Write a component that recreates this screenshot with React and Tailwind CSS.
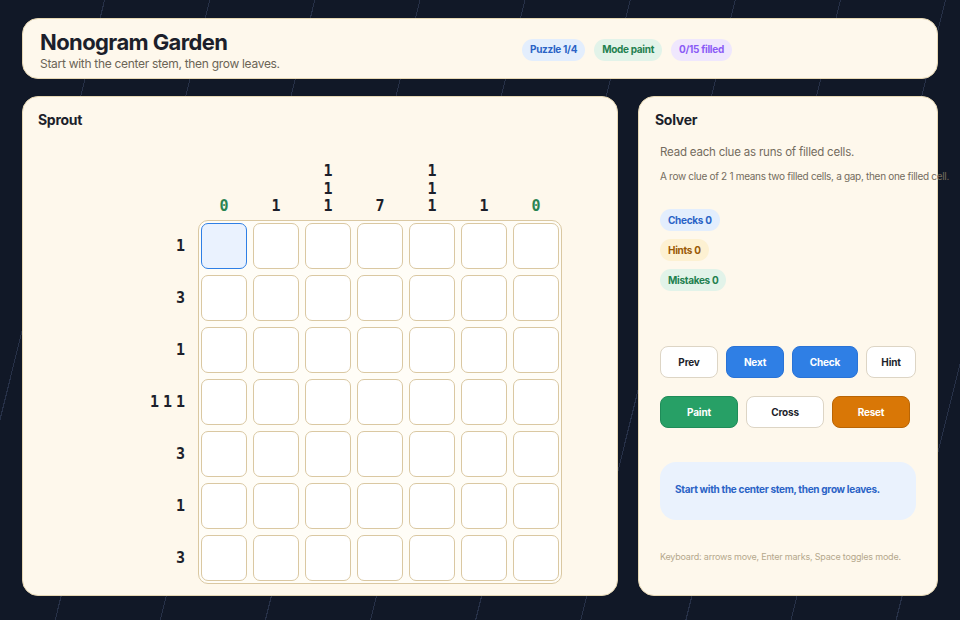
import React from "react";

const COL_CLUES = [[0], [1], [1, 1, 1], [7], [1, 1, 1], [1], [0]];
const ROW_CLUES = [[1], [3], [1], [1, 1, 1], [3], [1], [3]];
const SIZE = 7;

const ui = { fontFamily: "Inter, 'Noto Sans', sans-serif" };
const mono = { fontFamily: "'DejaVu Sans Mono', 'Liberation Mono', monospace" };

function Pill({ className, children }) {
  return (
    <span
      className={`inline-flex h-[22px] items-center rounded-full px-[8px] text-[10px] font-bold tracking-[-0.3px] ${className}`}
    >
      {children}
    </span>
  );
}

function Btn({ className, children }) {
  return (
    <button
      className={`flex h-[32px] items-center justify-center rounded-[8px] border text-[10px] font-bold tracking-[-0.2px] ${className}`}
    >
      {children}
    </button>
  );
}

function ClueDigit({ n }) {
  return <span className={n === 0 ? "text-[#2a8452]" : "text-[#1c1f2b]"}>{n}</span>;
}

function Board() {
  return (
    <div className="flex flex-col" style={mono}>
      {/* column clues, stacked from the bottom */}
      <div className="flex items-end">
        <div className="w-[123px] shrink-0" />
        <div className="flex items-end gap-[6px]">
          {COL_CLUES.map((clue, i) => (
            <div
              key={i}
              className="flex w-[46px] flex-col items-center text-[15px] font-bold leading-[17.5px]"
            >
              {clue.map((n, j) => (
                <ClueDigit key={j} n={n} />
              ))}
            </div>
          ))}
        </div>
      </div>

      <div className="mt-[4px] flex">
        {/* row clues */}
        <div className="flex w-[107px] shrink-0 flex-col gap-[6px] pt-[4px]">
          {ROW_CLUES.map((clue, i) => (
            <div
              key={i}
              className="flex h-[46px] items-center justify-end gap-[4px] text-[15px] font-bold"
            >
              {clue.map((n, j) => (
                <ClueDigit key={j} n={n} />
              ))}
            </div>
          ))}
        </div>

        {/* cell grid */}
        <div className="ml-[13px] rounded-[10px] border border-[#dac8a2] bg-[#fffdf7] p-[2px]">
          <div className="grid grid-cols-[repeat(7,46px)] gap-[6px]">
            {Array.from({ length: SIZE * SIZE }).map((_, i) => (
              <div
                key={i}
                className={
                  i === 0
                    ? "h-[46px] w-[46px] rounded-[7px] border-[1.5px] border-[#2f7fe5] bg-[#eaf2fe]"
                    : "h-[46px] w-[46px] rounded-[7px] border border-[#dac8a2] bg-white"
                }
              />
            ))}
          </div>
        </div>
      </div>
    </div>
  );
}

export default function App() {
  return (
    <div
      className="h-[620px] w-full overflow-hidden bg-[#111827] bg-[repeating-linear-gradient(104deg,transparent_0px,transparent_101px,rgba(71,85,120,0.4)_101px,rgba(71,85,120,0.4)_102px)] px-[22px] pt-[18px]"
      style={ui}
    >
      {/* header */}
      <header className="flex h-[61px] items-center rounded-[16px] border border-[#e6d7b4] bg-[#fef8ec] pl-[17px]">
        <div className="w-[482px] shrink-0 pt-[2px]">
          <h1 className="text-[22px] font-bold leading-[26px] tracking-[-0.6px] text-[#1c1f2b]">
            Nonogram Garden
          </h1>
          <p className="mt-[2px] text-[12px] leading-[14px] tracking-[-0.3px] text-[#6b6456]">
            Start with the center stem, then grow leaves.
          </p>
        </div>
        <div className="flex items-center gap-[9px] pt-[2px]">
          <Pill className="bg-[#e3eefd] text-[#2a63c6]">Puzzle 1/4</Pill>
          <Pill className="bg-[#e2f3e9] text-[#23804f]">Mode paint</Pill>
          <Pill className="bg-[#efe7fd] text-[#8b5cf6]">0/15 filled</Pill>
        </div>
      </header>

      <main className="mt-[17px] flex gap-[20px]">
        {/* board panel */}
        <section className="h-[500px] w-[596px] shrink-0 rounded-[16px] border border-[#e6d7b4] bg-[#fef8ec] px-[15px] pt-[14px]">
          <h2 className="text-[14px] font-bold leading-[18px] tracking-[-0.3px] text-[#1c1f2b]">Sprout</h2>
          <div className="mt-[34px] flex justify-center">
            <Board />
          </div>
        </section>

        {/* solver panel */}
        <aside className="h-[500px] w-[300px] shrink-0 rounded-[16px] border border-[#e6d7b4] bg-[#fef8ec] pl-[16px] pt-[14px]">
          <h2 className="text-[14px] font-bold leading-[18px] tracking-[-0.3px] text-[#1c1f2b]">Solver</h2>
          <div className="pl-[5px]">
            <p className="mt-[16px] whitespace-nowrap text-[11.5px] leading-[14px] tracking-[-0.2px] text-[#746c5e]">
              Read each clue as runs of filled cells.
            </p>
            <p className="mt-[11px] whitespace-nowrap text-[10px] leading-[12px] tracking-[-0.3px] text-[#746c5e]">
              A row clue of 2 1 means two filled cells, a gap, then one filled cell.
            </p>

            <div className="mt-[27px] flex flex-col items-start gap-[8px]">
              <Pill className="bg-[#e3eefd] text-[#2a63c6]">Checks 0</Pill>
              <Pill className="bg-[#fdf1d2] text-[#9a5a06]">Hints 0</Pill>
              <Pill className="bg-[#e2f3e9] text-[#23804f]">Mistakes 0</Pill>
            </div>

            <div className="mt-[55px] flex gap-[8px]">
              <Btn className="w-[58px] border-[#ddd5c5] bg-white text-[#1c1f2b]">Prev</Btn>
              <Btn className="w-[58px] border-[#2a73d6] bg-[#2f7fe5] text-white">Next</Btn>
              <Btn className="w-[66px] border-[#2a73d6] bg-[#2f7fe5] text-white">Check</Btn>
              <Btn className="w-[50px] border-[#ddd5c5] bg-white text-[#1c1f2b]">Hint</Btn>
            </div>
            <div className="mt-[18px] flex gap-[8px]">
              <Btn className="w-[78px] border-[#1f8c59] bg-[#27a066] text-white">Paint</Btn>
              <Btn className="w-[78px] border-[#ddd5c5] bg-white text-[#1c1f2b]">Cross</Btn>
              <Btn className="w-[78px] border-[#b96505] bg-[#d97706] text-white">Reset</Btn>
            </div>

            <div className="mt-[34px] flex h-[58px] w-[256px] items-center rounded-[16px] bg-[#eaf2fd] px-[15px] pb-[4px]">
              <p className="text-[10px] font-bold tracking-[-0.3px] text-[#2a63c6]">
                Start with the center stem, then grow leaves.
              </p>
            </div>

            <p className="mt-[30px] whitespace-nowrap text-[9px] tracking-[-0.2px] text-[#b5a88c]">
              Keyboard: arrows move, Enter marks, Space toggles mode.
            </p>
          </div>
        </aside>
      </main>
    </div>
  );
}
